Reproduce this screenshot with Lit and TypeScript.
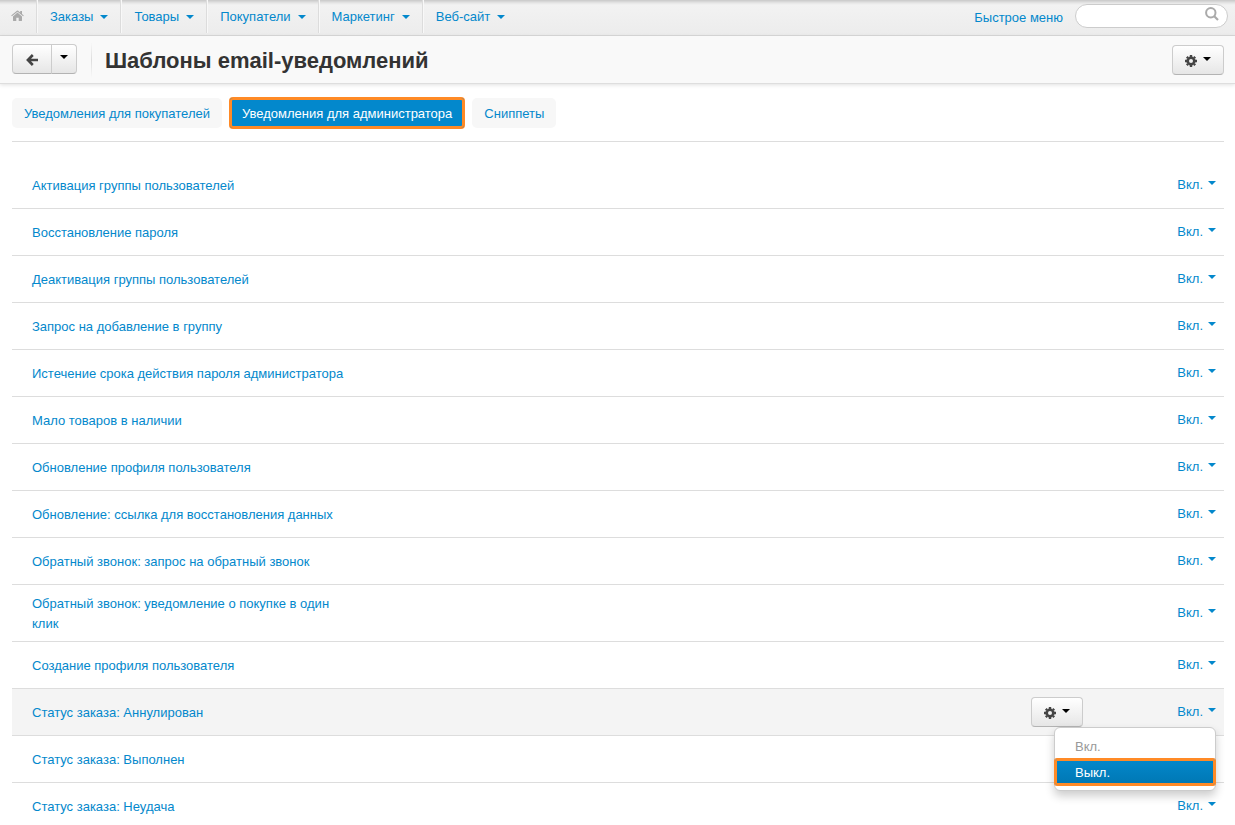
import { LitElement, html, css, svg, nothing } from "lit";
import { customElement, state } from "lit/decorators.js";
import { classMap } from "lit/directives/class-map.js";

const NAV = ["Заказы", "Товары", "Покупатели", "Маркетинг", "Веб-сайт"];

const TABS = [
  "Уведомления для покупателей",
  "Уведомления для администратора",
  "Сниппеты",
];

const TEMPLATES = [
  "Активация группы пользователей",
  "Восстановление пароля",
  "Деактивация группы пользователей",
  "Запрос на добавление в группу",
  "Истечение срока действия пароля администратора",
  "Мало товаров в наличии",
  "Обновление профиля пользователя",
  "Обновление: ссылка для восстановления данных",
  "Обратный звонок: запрос на обратный звонок",
  "Обратный звонок: уведомление о покупке в один клик",
  "Создание профиля пользователя",
  "Статус заказа: Аннулирован",
  "Статус заказа: Выполнен",
  "Статус заказа: Неудача",
];

const homeIcon = svg`<svg class="icon" width="13" height="12" viewBox="0 0 13 12" aria-hidden="true">
  <path fill="currentColor" d="M6.5 2.6 11 6.4V10.600Q11 11 10.600 11H7.700V7.700H5.300V11H2.400Q2 11 2 10.600V6.400Z"/>
  <path fill="currentColor" d="M6.500.4Q6.800.4 7.100.7L9.200 2.500V.9H11V4L12.800 5.500 12.100 6.300 6.500 1.700.9 6.300.2 5.500 5.900.7Q6.200.4 6.500.4Z"/>
</svg>`;

const arrowIcon = svg`<svg class="icon" width="12" height="12" viewBox="0 0 12 12" aria-hidden="true">
  <path fill="none" stroke="currentColor" stroke-width="2.600" d="M6.800 1 1.900 6 6.800 11M2 6H12"/>
</svg>`;

const gearIcon = svg`<svg class="icon" width="12" height="12" viewBox="-6 -6 12 12" aria-hidden="true">
  <circle r="3.300" fill="none" stroke="currentColor" stroke-width="2.600"/>
  <path stroke="currentColor" stroke-width="2.400" d="M0-6V-4M0 6V4M-6 0H-4M6 0H4M-4.200-4.200-3-3M4.200 4.200 3 3M-4.200 4.200-3 3M4.200-4.200 3-3"/>
</svg>`;

const searchIcon = svg`<svg width="14" height="14" viewBox="0 0 14 14" aria-hidden="true">
  <circle cx="5.800" cy="5.800" r="4.700" fill="none" stroke="currentColor" stroke-width="2"/>
  <path stroke="currentColor" stroke-width="2.200" d="M9 9 13 13"/>
</svg>`;

@customElement("app-root")
export class AppRoot extends LitElement {
  @state() private tab = 1;
  @state() private openRow = 11;

  static styles = css`
    :host {
      display: block;
      height: 100vh;
      overflow-y: auto;
      scrollbar-width: none;
      background: #fff;
      color: #333;
      font: 13px/20px "Liberation Sans", Arial, sans-serif;
    }
    * { box-sizing: border-box; }
    a { color: #0388cc; text-decoration: none; }
    button { font: inherit; margin: 0; cursor: pointer; }
    .icon { display: block; flex: none; }

    .caret {
      flex: none;
      border-top: 4px solid currentColor;
      border-left: 4px solid transparent;
      border-right: 4px solid transparent;
    }

    .topbar {
      display: flex;
      justify-content: space-between;
      height: 36px;
      border-bottom: 1px solid #d9d9d9;
      background: linear-gradient(#c8c8c8, #e6e6e6 3px, #f2f2f2 5px, #ececec);
    }
    .nav { display: flex; }
    .home, .navitem {
      display: flex;
      align-items: center;
      border-right: 1px solid #dcdcdc;
      box-shadow: 1px 0 0 #f8f8f8;
      margin-bottom: 2px;
    }
    .home { padding: 0 12px 2px 11px; color: #aaa; }
    .navitem { color: #0388cc; }
    .navitem:last-child { border-right: 0; box-shadow: none; }
    .navitem button {
      display: flex;
      align-items: center;
      gap: 7px;
      padding: 0 12px 0 13px;
      border: 0;
      background: none;
      color: inherit;
    }
    .tools { display: flex; align-items: center; gap: 12px; padding-right: 7px; }
    .search { position: relative; display: flex; margin-bottom: 4px; }
    .search input {
      width: 153px;
      height: 24px;
      padding: 0 30px 0 12px;
      border: 1px solid #ccc;
      border-radius: 12px;
      background: #fff;
      font: inherit;
      outline: 0;
    }
    .search button {
      position: absolute;
      top: 3px;
      right: 9px;
      display: flex;
      padding: 0;
      border: 0;
      background: none;
      color: #aaa;
    }

    .titlebar {
      display: flex;
      align-items: center;
      height: 48px;
      padding: 0 11px 0 12px;
      border-bottom: 1px solid #dedede;
      background: #f9f9f9;
      box-shadow: 0 1px 4px rgba(0, 0, 0, 0.12);
    }
    .btngroup { display: flex; padding-bottom: 1px; }
    .btn {
      display: flex;
      align-items: center;
      justify-content: center;
      gap: 6px;
      height: 30px;
      padding: 2px 12px 0;
      border: 1px solid #ccc;
      border-bottom-color: #b3b3b3;
      border-radius: 4px;
      background: linear-gradient(#fff, #e6e6e6);
      color: #444;
    }
    .btn .caret { margin-bottom: 4px; color: #000; }
    .back { width: 40px; border-radius: 4px 0 0 4px; }
    .history { width: 26px; padding: 0; margin-left: -1px; border-radius: 0 4px 4px 0; }
    .divider {
      width: 1px;
      height: 36px;
      margin: 0 13px 0 14px;
      background: linear-gradient(#f9f9f9, #ddd, #f9f9f9);
    }
    h1 {
      flex: 1;
      margin: 0;
      padding-top: 2px;
      font-size: 22px;
      line-height: 30px;
      font-weight: bold;
    }

    main { padding: 14px 11px 0 12px; }
    .tabs {
      display: flex;
      gap: 8px;
      padding-bottom: 13px;
      margin-bottom: 20px;
      border-bottom: 1px solid #ddd;
    }
    .tab { padding: 6px 12px 4px; border-radius: 5px; background: #f7f7f7; }
    .tab.active {
      background: #0388cc;
      color: #fff;
      border-radius: 3px;
      box-shadow: inset 0 0 0 2px #ff8a26, 0 0 0 1px #ff8a26;
    }

    table {
      width: 100%;
      border-collapse: separate;
      border-spacing: 0;
      table-layout: fixed;
    }
    .name { width: 29%; }
    .actions { width: 60%; }
    td {
      height: 47px;
      padding: 9px 8px 7px;
      border-bottom: 1px solid #ddd;
      vertical-align: middle;
    }
    td.name { padding-left: 20px; }
    td.actions, td.status { padding-top: 0; padding-bottom: 0; }
    tr.current { background: #f4f4f4; }
    .cell { position: relative; display: flex; justify-content: flex-end; }
    .toggle {
      display: flex;
      gap: 5px;
      padding: 0;
      border: 0;
      background: none;
      color: #0388cc;
    }
    .toggle .caret { margin-top: 6px; }
    .menu {
      position: absolute;
      z-index: 2;
      top: 25px;
      right: 0;
      width: 162px;
      margin: 0;
      padding: 5px 0;
      list-style: none;
      border: 1px solid #ccc;
      border-radius: 6px;
      background: #fff;
      box-shadow: 0 5px 10px rgba(0, 0, 0, 0.2);
    }
    .option {
      display: block;
      width: 100%;
      padding: 4px 20px 2px;
      border: 0;
      background: none;
      color: #999;
      text-align: left;
    }
    .option.selected {
      background: linear-gradient(#0388cc, #0077b3);
      color: #fff;
      border-radius: 2px;
      box-shadow: inset 0 0 0 2px #ff8a26, 0 0 0 1px #ff8a26;
    }
  `;

  private toggleRow(i: number) {
    this.openRow = this.openRow === i ? -1 : i;
  }

  private row(name: string, i: number) {
    const open = this.openRow === i;
    return html`<tr class=${classMap({ current: open })}>
      <td class="name"><a href="#">${name}</a></td>
      <td class="actions">
        ${open
          ? html`<div class="cell">
              <button class="btn" aria-label="Действия">${gearIcon}<span class="caret"></span></button>
            </div>`
          : nothing}
      </td>
      <td class="status">
        <div class="cell">
          <button class="toggle" aria-expanded=${open} @click=${() => this.toggleRow(i)}>
            Вкл.<span class="caret"></span>
          </button>
          ${open
            ? html`<ul class="menu">
                <li><button class="option" disabled>Вкл.</button></li>
                <li><button class="option selected">Выкл.</button></li>
              </ul>`
            : nothing}
        </div>
      </td>
    </tr>`;
  }

  render() {
    return html`
      <header>
        <div class="topbar">
          <nav class="nav">
            <a class="home" href="#" aria-label="Главная">${homeIcon}</a>
            ${NAV.map(
              (n) => html`<div class="navitem"><button>${n}<span class="caret"></span></button></div>`,
            )}
          </nav>
          <div class="tools">
            <a href="#">Быстрое меню</a>
            <div class="search">
              <input type="text" aria-label="Поиск" />
              <button aria-label="Найти">${searchIcon}</button>
            </div>
          </div>
        </div>
        <div class="titlebar">
          <div class="btngroup">
            <button class="btn back" aria-label="Назад">${arrowIcon}</button>
            <button class="btn history" aria-label="История"><span class="caret"></span></button>
          </div>
          <span class="divider"></span>
          <h1>Шаблоны email-уведомлений</h1>
          <button class="btn" aria-label="Настройки">${gearIcon}<span class="caret"></span></button>
        </div>
      </header>
      <main>
        <nav class="tabs">
          ${TABS.map(
            (t, i) => html`<a
              href="#"
              class=${classMap({ tab: true, active: this.tab === i })}
              @click=${() => (this.tab = i)}
              >${t}</a
            >`,
          )}
        </nav>
        <table>
          <tbody>
            ${TEMPLATES.map((t, i) => this.row(t, i))}
          </tbody>
        </table>
      </main>
    `;
  }
}
